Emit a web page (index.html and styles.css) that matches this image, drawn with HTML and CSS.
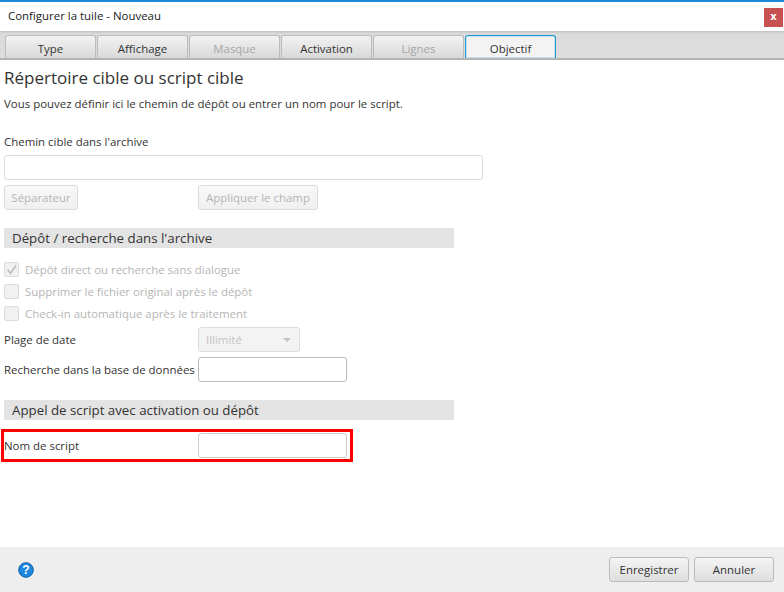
FILE: index.html
```html
<!DOCTYPE html>
<html lang="fr">
<head>
<meta charset="utf-8">
<title>Configurer la tuile - Nouveau</title>
<link rel="stylesheet" href="styles.css">
</head>
<body>
<div class="window">
  <header class="titlebar">
    <span class="title">Configurer la tuile - Nouveau</span>
    <button class="close">x</button>
  </header>
  <nav class="tabs">
    <div class="tab t1">Type</div>
    <div class="tab t2">Affichage</div>
    <div class="tab t3 disabled">Masque</div>
    <div class="tab t4">Activation</div>
    <div class="tab t5 disabled">Lignes</div>
    <div class="tab t6 active">Objectif</div>
  </nav>
  <main class="content">
    <h1>Répertoire cible ou script cible</h1>
    <p class="intro">Vous pouvez définir ici le chemin de dépôt ou entrer un nom pour le script.</p>
    <label class="path-label">Chemin cible dans l'archive</label>
    <div class="field path-field"></div>
    <div class="path-buttons">
      <div class="btn-off sep">Séparateur</div>
      <div class="btn-off apply">Appliquer le champ</div>
    </div>
    <h2 class="section s1">Dépôt / recherche dans l'archive</h2>
    <div class="checks">
      <div class="check"><span class="box"><svg width="15" height="15" viewBox="0 0 15 15"><path d="M3.5 7.5 L6.5 11.5 L12 3.5" fill="none" stroke="#bdbdbd" stroke-width="1.6"/></svg></span>Dépôt direct ou recherche sans dialogue</div>
      <div class="check"><span class="box"></span>Supprimer le fichier original après le dépôt</div>
      <div class="check"><span class="box"></span>Check-in automatique après le traitement</div>
    </div>
    <div class="row date-row">
      <span class="row-label">Plage de date</span>
      <div class="select"><span>Illimité</span><i class="arrow"></i></div>
    </div>
    <div class="row search-row">
      <span class="row-label">Recherche dans la base de données</span>
      <div class="field small dark"></div>
    </div>
    <h2 class="section s2">Appel de script avec activation ou dépôt</h2>
    <div class="highlight">
      <span class="row-label">Nom de script</span>
      <div class="field small"></div>
    </div>
  </main>
  <footer class="footer">
    <svg class="help" width="16" height="16" viewBox="0 0 16 16"><circle cx="8" cy="8" r="7.3" fill="#1f86e0" stroke="#0f5ea8" stroke-width="1"/><text x="8" y="12.2" text-anchor="middle" class="help-q">?</text></svg>
    <div class="actions">
      <button class="btn">Enregistrer</button>
      <button class="btn">Annuler</button>
    </div>
  </footer>
</div>
</body>
</html>
```
FILE: styles.css
```css
* { box-sizing: border-box; }
html, body { margin: 0; padding: 0; background: #fff; }
body { font-family: "Open Sans", "Noto Sans", sans-serif; font-size: 11.45px; color: #333; }
.window { width: 784px; height: 592px; display: flex; flex-direction: column; border-top: 2px solid #1b87d9; overflow: hidden; }

.titlebar { height: 29px; flex: none; display: flex; align-items: center; justify-content: space-between; padding: 0 1px 0 8px; }
.title { font-size: 11.45px; color: #222; padding-bottom: 2px; }
.close { width: 19px; height: 19px; margin-top: 2px; border: 0; padding: 0 0 2px; background: #c75050; color: #fff; font: bold 10px "DejaVu Sans", sans-serif; }

.tabs { height: 29px; flex: none; display: flex; align-items: flex-end; padding-left: 5px; background: #dcdcdc; border-bottom: 2px solid #b4b4b4; box-shadow: inset 0 3px 3px -2px #bbb; }
.tab { height: 23px; padding-top: 2px; display: flex; align-items: center; justify-content: center; border: 1px solid #bbb; border-bottom: 0; border-radius: 3px 3px 0 0; background: linear-gradient(#f2f2f2, #d9d9d9); color: #333; }
.t1 { width: 91px; margin-right: 1px; }
.t2 { width: 91px; margin-right: 1px; }
.t3 { width: 91px; margin-right: 1px; }
.t4 { width: 91px; margin-right: 1px; }
.t5 { width: 91px; margin-right: 1px; }
.t6 { width: 91px; }
.tab.disabled { color: #a6a6a6; }
.tab.active { background: #f3f3f3; border: 1px solid #1f9bd1; border-bottom: 0; box-shadow: inset 0 0 0 1px #c5e3ef; }

.content { flex: 1; padding: 0 0 0 4px; display: flex; flex-direction: column; align-items: flex-start; position: relative; }
h1 { margin: 6px 0 0; font-size: 17px; font-weight: 400; line-height: 24px; color: #333; }
.intro { margin: 6px 0 0; line-height: 16px; }
.path-label { margin-top: 22px; line-height: 16px; }
.field { border: 1px solid #dcdcdc; border-radius: 3px; background: #fff; }
.path-field { width: 479px; height: 25px; margin-top: 5px; }
.path-buttons { display: flex; margin-top: 5px; }
.btn-off { height: 25px; display: flex; align-items: center; justify-content: center; border: 1px solid #dcdcdc; border-radius: 3px; background: linear-gradient(#f8f8f8, #f0f0f0); color: #b5b5b5; }
.sep { width: 74px; margin-right: 120px; }
.apply { width: 120px; }
.section { width: 450px; height: 20px; margin: 18px 0 0; padding-left: 8px; background: #e3e3e3; font-size: 13.3px; font-weight: 400; line-height: 20px; color: #333; }
.checks { margin-top: 10px; }
.check { height: 22px; display: flex; align-items: center; gap: 6px; color: #b5b5b5; }
.box { width: 15px; height: 15px; border: 1px solid #dcdcdc; border-radius: 2px; background: #f1f1f1; display: block; position: relative; }
.box svg { position: absolute; left: -1px; top: -1px; }
.row { display: flex; align-items: center; width: 100%; }
.row-label { width: 194px; flex: none; white-space: nowrap; }
.date-row { margin-top: 3px; height: 25px; }
.search-row { margin-top: 5px; height: 25px; }
.select { width: 102px; height: 25px; display: flex; align-items: center; justify-content: space-between; padding: 0 8px 0 7px; border: 1px solid #dcdcdc; border-radius: 3px; background: #f3f3f3; color: #c4c4c4; }
.arrow { width: 0; height: 0; border-left: 4px solid transparent; border-right: 4px solid transparent; border-top: 4px solid #c4c4c4; }
.small { width: 149px; height: 25px; }
.dark { border-color: #bbb; }
.s2 { margin-top: 18px; }
.highlight { display: flex; align-items: center; width: 352px; height: 33px; margin: 9px 0 0 -3px; border: 3px solid #f00; }
.highlight .small { border-color: #ccc; }

.footer { height: 45px; flex: none; display: flex; align-items: center; justify-content: space-between; padding: 0 10px 0 18px; background: #eee; }
.help { display: block; }
.help-q { font: bold 12px "Liberation Sans", sans-serif; fill: #fff; }
.actions { display: flex; gap: 5px; }
.btn { width: 80px; height: 25px; padding: 0; border: 1px solid #bbb; border-radius: 3px; background: linear-gradient(#f4f4f4, #dedede); font: 11.45px "Open Sans", "Noto Sans", sans-serif; color: #333; }
```
